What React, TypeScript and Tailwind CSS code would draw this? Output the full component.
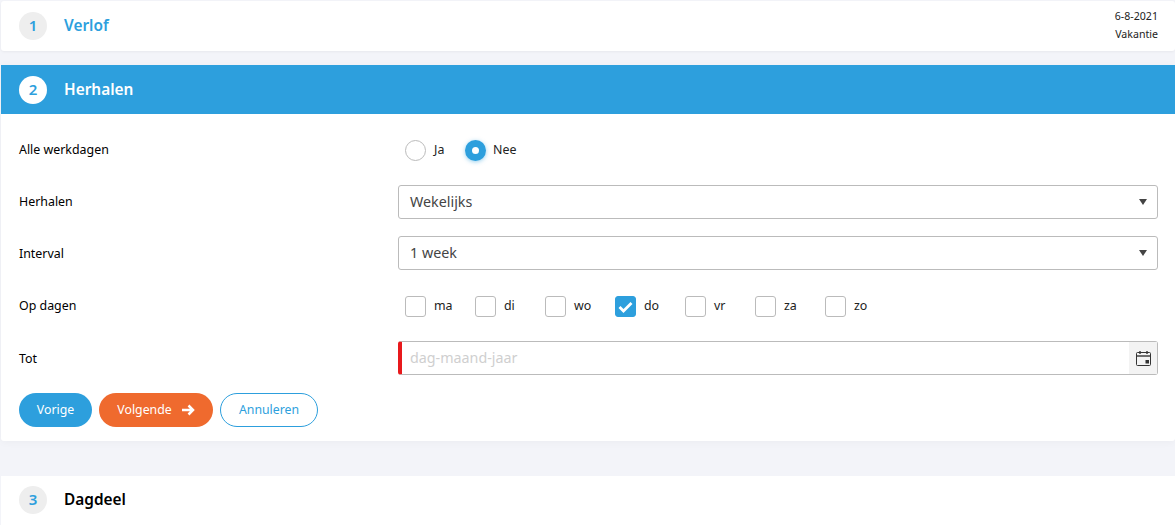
import React from "react";

function Step({ n, active }: { n: number; active?: boolean }) {
  return (
    <div className={`w-7 h-7 pb-px rounded-full flex items-center justify-center text-[15px] font-semibold text-[#2d9fdd] ${active ? "bg-white" : "bg-[#eeeeee]"}`}>
      {n}
    </div>
  );
}

function Arrow() {
  return (
    <svg width="8" height="6" viewBox="0 0 8 6" className="absolute right-[10px] top-[13px]">
      <path d="M0 0H8L4 6Z" fill="#444444" />
    </svg>
  );
}

function Row({ label, children, className, labelClass }: { label: string; children: React.ReactNode; className?: string; labelClass?: string }) {
  return (
    <div className={`flex items-center ${className ?? ""}`}>
      <div className={`w-[379px] shrink-0 text-[12.4px] text-black ${labelClass ?? ""}`}>{label}</div>
      <div className="flex-1 min-w-0">{children}</div>
    </div>
  );
}

function Select({ value }: { value: string }) {
  return (
    <div className="relative h-[34px] border border-[#bbbbbb] rounded-[3px] pl-[11px] pb-px flex items-center text-[14.3px] text-[#444444]">
      {value}
      <Arrow />
    </div>
  );
}

function Day({ label, checked }: { label: string; checked?: boolean }) {
  return (
    <div className="w-[70px] flex items-center gap-[8px] text-[12.4px] text-[#222222]">
      <div className={`w-[21px] h-[21px] rounded-[3px] flex items-center justify-center border ${checked ? "bg-[#2d9fdd] border-[#2d9fdd]" : "bg-white border-[#bbbbbb]"}`}>
        {checked && (
          <svg width="15" height="12" viewBox="0 0 15 12">
            <path d="M1.5 6L5.5 10L13.5 2" fill="none" stroke="white" strokeWidth="2.8" />
          </svg>
        )}
      </div>
      {label}
    </div>
  );
}

export default function App() {
  return (
    <div className="h-[525px] overflow-hidden bg-[#f3f4f9] pl-px pt-px font-['Noto_Sans','Open_Sans',sans-serif]">
      <section className="h-[50px] bg-white rounded-[3px] flex items-center pl-[18px] pr-[17px] shadow-[0_1px_3px_rgba(0,0,0,0.05)]">
        <Step n={1} />
        <h2 className="ml-[17px] pb-px text-[15.4px] font-semibold text-[#2d9fdd]">Verlof</h2>
        <div className="ml-auto pb-[2px] text-right text-[10.6px] leading-[18px] text-[#222222]">
          <div>6-8-2021</div>
          <div>Vakantie</div>
        </div>
      </section>

      <section className="mt-[14px] h-[376px] bg-white rounded-b-[3px] shadow-[0_1px_8px_rgba(0,0,0,0.04)]">
        <div className="h-[49px] bg-[#2d9fdd] flex items-center pl-[18px]">
          <Step n={2} active />
          <h2 className="ml-[17px] text-[15.4px] font-semibold text-white">Herhalen</h2>
        </div>
        <div className="pl-[18px] pr-[17px]">
          <Row label="Alle werkdagen" className="mt-[20px] h-[32px]">
            <div className="flex items-center pl-[7px] text-[12.4px] text-[#222222]">
              <div className="w-[21px] h-[21px] rounded-full border border-[#bbbbbb] bg-white" />
              <span className="ml-[8px] w-[18px]">Ja</span>
              <div className="ml-[13px] w-[21px] h-[21px] rounded-full bg-[#2d9fdd] flex items-center justify-center shadow-[0_1px_4px_rgba(45,159,221,0.5)]">
                <div className="w-[7px] h-[7px] rounded-full bg-white" />
              </div>
              <span className="ml-[7px]">Nee</span>
            </div>
          </Row>
          <Row label="Herhalen" className="mt-[19px]">
            <Select value="Wekelijks" />
          </Row>
          <Row label="Interval" className="mt-[17px]" labelClass="pt-[2px]">
            <Select value="1 week" />
          </Row>
          <Row label="Op dagen" className="mt-[26px]">
            <div className="flex pl-[7px]">
              <Day label="ma" />
              <Day label="di" />
              <Day label="wo" />
              <Day label="do" checked />
              <Day label="vr" />
              <Day label="za" />
              <Day label="zo" />
            </div>
          </Row>
          <Row label="Tot" className="mt-[24px]" labelClass="pt-[2px]">
            <div className="h-[34px] border border-[#bbbbbb] border-l-[4px] border-l-[#e8191c] rounded-[3px] flex items-center">
              <span className="pl-[8px] pb-px text-[14.3px] text-[#cfcfcf]">dag-maand-jaar</span>
              <div className="ml-auto w-[28px] h-full bg-[#f3f3f3] flex items-center justify-center">
                <svg width="15" height="16" viewBox="0 0 15 16" fill="none">
                  <rect x="0.5" y="2.5" width="14" height="13" rx="1" stroke="#333333" />
                  <path d="M1 6H14" stroke="#333333" strokeWidth="1.4" />
                  <path d="M4 1V4M11 1V4" stroke="#333333" strokeWidth="1.4" />
                  <rect x="9.5" y="10" width="3.5" height="3.5" fill="#333333" />
                </svg>
              </div>
            </div>
          </Row>
          <div className="mt-[18px] flex gap-[7px] text-[12.3px]">
            <button className="h-[34px] w-[73px] rounded-full bg-[#2d9fdd] text-white">Vorige</button>
            <button className="h-[34px] w-[114px] rounded-full bg-[#ef6a2e] text-white flex items-center justify-center gap-[9px]">
              Volgende
              <svg width="14" height="12" viewBox="0 0 14 12" fill="none">
                <path d="M1 6H12M7.5 1.5L12 6L7.5 10.5" stroke="white" strokeWidth="2.5" />
              </svg>
            </button>
            <button className="h-[34px] w-[98px] rounded-full border border-[#2d9fdd] text-[#2d9fdd] bg-white">Annuleren</button>
          </div>
        </div>
      </section>

      <section className="mt-[35px] h-[60px] bg-white flex items-start pt-[10px] pl-[18px]">
        <Step n={3} />
        <h2 className="ml-[17px] text-[15.4px] font-semibold text-black leading-[28px]">Dagdeel</h2>
      </section>
    </div>
  );
}
